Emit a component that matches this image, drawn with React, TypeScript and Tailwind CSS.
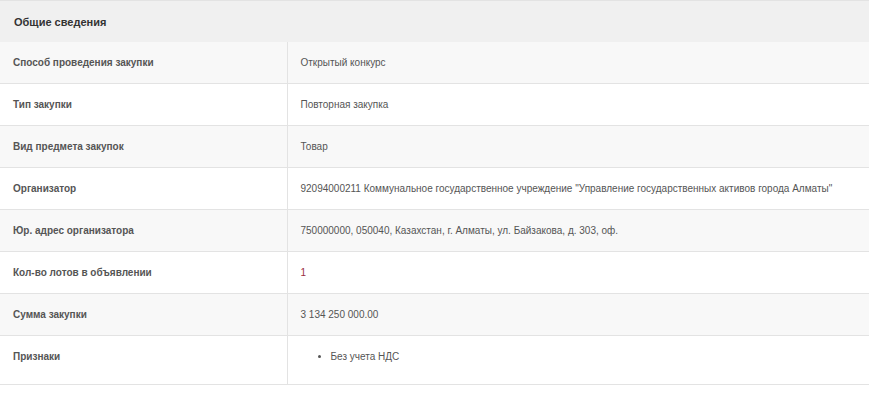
const ROWS: { label: string; value: React.ReactNode }[] = [
  { label: "Способ проведения закупки", value: "Открытый конкурс" },
  { label: "Тип закупки", value: "Повторная закупка" },
  { label: "Вид предмета закупок", value: "Товар" },
  {
    label: "Организатор",
    value:
      '92094000211 Коммунальное государственное учреждение "Управление государственных активов города Алматы"',
  },
  {
    label: "Юр. адрес организатора",
    value: "750000000, 050040, Казахстан, г. Алматы, ул. Байзакова, д. 303, оф.",
  },
  { label: "Кол-во лотов в объявлении", value: <span className="text-[#9b2f3f]">1</span> },
  { label: "Сумма закупки", value: "3 134 250 000.00" },
  {
    label: "Признаки",
    value: (
      <ul className="mb-[7px] list-disc pl-[30px]">
        <li>Без учета НДС</li>
      </ul>
    ),
  },
];

export default function App() {
  return (
    <div className="min-h-[393px] bg-white [font-family:Liberation_Sans,Arial,sans-serif] text-[10px] leading-[15px] text-[#555]">
      <table className="w-full border-collapse border-t border-[#e3e3e3]">
        <thead>
          <tr className="bg-[#f0f0f0]">
            <th
              colSpan={2}
              className="h-[41px] px-[14px] pt-[2px] text-left align-middle text-[11px] font-bold text-[#333]"
            >
              Общие сведения
            </th>
          </tr>
        </thead>
        <tbody>
          {ROWS.map((row, i) => (
            <tr key={row.label} className={i % 2 === 0 ? "bg-[#f8f8f8]" : "bg-white"}>
              <td className="w-[287px] border-r border-b border-[#e3e3e3] px-[13px] py-[13px] align-top font-bold">
                {row.label}
              </td>
              <td className="border-b border-[#e3e3e3] px-[13px] py-[13px] align-top">{row.value}</td>
            </tr>
          ))}
        </tbody>
      </table>
    </div>
  );
}
